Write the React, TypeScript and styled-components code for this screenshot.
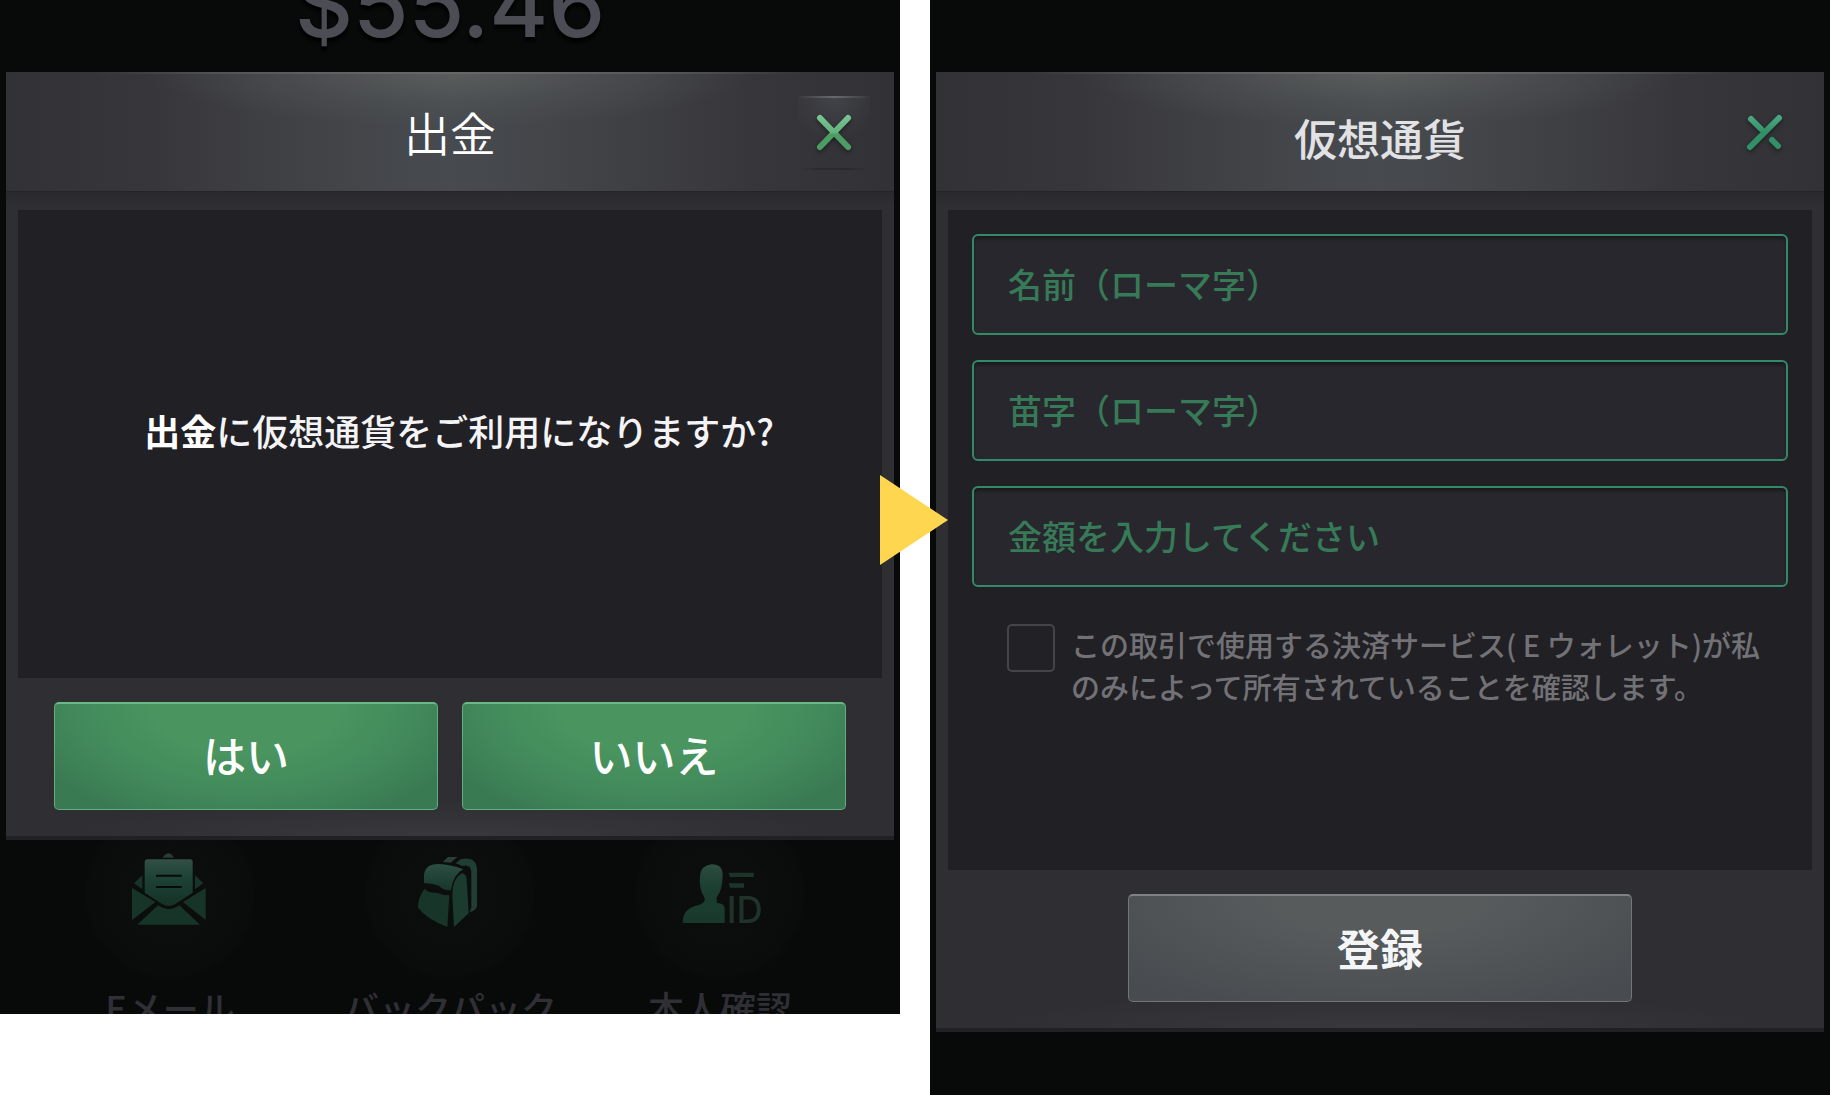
import React, { useState } from "react";
import styled, { createGlobalStyle, css } from "styled-components";

const GlobalStyle = createGlobalStyle`
  *, *::before, *::after { box-sizing: border-box; }
  body {
    margin: 0;
    background: #ffffff;
    font-family: "Noto Sans CJK JP", "Noto Sans", sans-serif;
  }
  button, input { font-family: inherit; }
`;

const Page = styled.main`
  display: grid;
  grid-template-columns: minmax(0, 1fr) 30px minmax(0, 1fr);
  align-items: start;
  min-height: 100vh;
`;

const Screen = styled.section<{ $fill?: boolean }>`
  background: #070a09;
  padding: 0 6px;
  overflow: hidden;
  ${(p) =>
    p.$fill &&
    css`
      align-self: stretch;
    `}
`;

const TopArea = styled.div`
  height: 72px;
  display: flex;
  align-items: flex-end;
  justify-content: center;
  overflow: hidden;
`;

const Balance = styled.div`
  font-family: Inter, "Liberation Sans", sans-serif;
  font-size: 90px;
  font-weight: 500;
  line-height: 134px;
  color: #4b4c54;
  text-shadow: 0 4px 3px #000000;
`;

const Dialog = styled.div`
  background: linear-gradient(#2a292e 120px, #2f2e33 132px, #2f2e33);
  border-bottom: 4px solid #212025;
`;

const DialogHeader = styled.header`
  height: 120px;
  display: grid;
  grid-template-columns: 72px 1fr 72px;
  align-items: center;
  padding: 2px 24px 0;
  border-bottom: 1px solid #252529;
  background:
    radial-gradient(ellipse 34% 46% at 50% 0, rgba(96, 99, 96, 0.75), rgba(84, 88, 88, 0.4) 55%, transparent) top / 100% 100% no-repeat,
    linear-gradient(90deg, transparent 10%, #77787a 50%, transparent 90%) top / 100% 2px no-repeat,
    linear-gradient(90deg, #323136, #37363b 16%, #3f4044 30%, #474b4f 50%, #3f4044 70%, #37363b 84%, #323136);
`;

const Title = styled.h1<{ $light?: boolean }>`
  grid-column: 2;
  margin: 0;
  text-align: center;
  font-size: ${(p) => (p.$light ? 46 : 43)}px;
  line-height: 56px;
  font-weight: ${(p) => (p.$light ? 350 : 500)};
  color: ${(p) => (p.$light ? "#ffffff" : "#e2e2e5")};
  padding: ${(p) => (p.$light ? "0 0 4px" : "8px 0 0")};
`;

const CloseButton = styled.button<{ $raised?: boolean }>`
  width: 72px;
  height: 74px;
  padding: 0;
  border: 0;
  display: grid;
  place-items: center;
  cursor: pointer;
  background: ${(p) =>
    p.$raised
      ? `linear-gradient(90deg, transparent, #66686b, transparent) top / 100% 2px no-repeat,
         linear-gradient(90deg, transparent, #2b2a2f 30%, #2b2a2f 70%, transparent) bottom / 100% 2px no-repeat,
         radial-gradient(ellipse 60% 60% at 50% 0, #424449, transparent)`
      : "transparent"};
  svg {
    width: 36px;
    height: 37px;
    overflow: visible;
    filter: drop-shadow(0 2px 2px rgba(0, 0, 0, 0.4));
  }
`;

const DialogBody = styled.div`
  margin: 18px 12px 0;
  background: #212025;
`;

const Message = styled.p`
  margin: 0;
  min-height: 468px;
  padding: 0 0 28px 18px;
  display: flex;
  align-items: center;
  justify-content: center;
  font-size: 36px;
  line-height: 48px;
  font-weight: 500;
  color: #f4f4f6;
  strong {
    font-weight: 700;
    color: #ffffff;
  }
`;

const Actions = styled.div`
  display: flex;
  justify-content: center;
  gap: 24px;
  padding: 24px 48px 26px;
  background: radial-gradient(ellipse 44% 22% at 50% 100%, #39383d, transparent);
`;

const ActionButton = styled.button<{ $tone: "green" | "gray" }>`
  height: 108px;
  padding: 0 0 6px;
  border-radius: 5px;
  font-size: 43px;
  cursor: pointer;
  ${(p) =>
    p.$tone === "green"
      ? css`
          flex: 1;
          font-weight: 500;
          color: #ffffff;
          border: 1px solid #62b07f;
          border-top: 2px solid #6bb987;
          background: radial-gradient(ellipse 62% 120% at 50% 0, #49945f 40%, #428a5b 70%, #3a7a53 100%);
        `
      : css`
          width: 504px;
          padding-bottom: 4px;
          font-weight: 700;
          color: #f4f5f6;
          border: 1px solid #717678;
          border-top: 2px solid #7e8284;
          background: radial-gradient(ellipse 68% 120% at 50% 0, #575b5c 30%, #4d5154 75%, #484b50 100%);
        `}
`;

const Shortcuts = styled.nav`
  height: 174px;
  overflow: hidden;
  display: grid;
  grid-template-columns: 28fr 28fr 26fr;
  padding: 0 44px 0 24px;
`;

const Shortcut = styled.a`
  display: flex;
  flex-direction: column;
  align-items: center;
  color: #302f35;
  text-decoration: none;
  font-size: 36px;
  font-weight: 500;
  line-height: 36px;
`;

const ShortcutIcon = styled.span`
  width: 170px;
  height: 149px;
  display: flex;
  justify-content: center;
  padding-top: 2px;
  background: radial-gradient(circle at 50% 54px, #0c0f0e, #090c0b 82px, transparent 86px);
  svg {
    width: 96px;
    height: 96px;
    opacity: 0.9;
  }
`;

const Gutter = styled.div`
  position: relative;
  align-self: stretch;
`;

const Arrow = styled.svg`
  position: absolute;
  z-index: 1;
  top: 475px;
  left: -20px;
  width: 68px;
  height: 90px;
`;

const Form = styled.form`
  margin: 0;
`;

const Fields = styled.div`
  display: flex;
  flex-direction: column;
  gap: 25px;
  min-height: 660px;
  padding: 24px;
`;

const Field = styled.input`
  width: 100%;
  height: 101px;
  padding: 0 34px 2px;
  border: 2px solid #348a68;
  border-radius: 6px;
  outline: none;
  background: #28272d;
  box-shadow: inset 0 3px 3px rgba(0, 0, 0, 0.35);
  color: #49a878;
  font-size: 34px;
  font-weight: 500;
  &::placeholder {
    color: #377a58;
    opacity: 1;
  }
`;

const Consent = styled.label`
  display: flex;
  align-items: flex-start;
  gap: 16px;
  padding: 11px 20px 0 35px;
  color: #727276;
  font-size: 29px;
  font-weight: 500;
  line-height: 42px;
`;

const Checkbox = styled.input`
  appearance: none;
  flex: none;
  width: 48px;
  height: 48px;
  margin: 1px 0 0;
  border: 2px solid #454449;
  border-radius: 5px;
  background: #222126;
  &:checked {
    background: #348a68;
  }
`;

function EnvelopeIcon() {
  return (
    <svg viewBox="66 6 288 288" aria-hidden="true">
      <defs>
        <linearGradient id="paper" x1="0" y1="0" x2="0" y2="1">
          <stop offset="0" stopColor="#38574c" />
          <stop offset="0.4" stopColor="#20483a" />
          <stop offset="1" stopColor="#17362a" />
        </linearGradient>
      </defs>
      <path d="M188 53q18-26 34 0z" fill="#2f3f3b" />
      <path d="M134 66q0-8 8-8h128q8 0 8 8v92l-52 34q-20 12-40 0l-52-34z" fill="url(#paper)" />
      <path d="M127 106v42l-25-18zM285 106v42l25-18zM96 144l70 42-70 54zM317 144l-68 42 68 54zM112 254l62-58q34 22 64 0l62 58z" fill="#19392c" />
      <path d="M168 107h77M168 141h77" stroke="#080b0a" strokeWidth="6" />
    </svg>
  );
}

function BackpackIcon() {
  return (
    <svg viewBox="906 6 288 288" aria-hidden="true">
      <defs>
        <linearGradient id="pack" x1="0" y1="0" x2="0" y2="1">
          <stop offset="0" stopColor="#30564a" />
          <stop offset="1" stopColor="#193b2e" />
        </linearGradient>
      </defs>
      <path d="M1028 66l16-15h28l-20 17z" fill="#30443e" />
      <path d="M1067 70l16-13q46-8 48 32v108q-2 14-23 20l6-14V96q-2-24-26-18z" fill="#24443a" />
      <path d="M972 130V104q4-32 42-32 44 2 76 16-30 14-37 63-24 0-36-14-26-8-45-7z" fill="url(#pack)" />
      <path d="M1058 184q-6-66 28-84 14 2 14 20l6 100-44 41z" fill="#1c4031" />
      <path d="M974 146q10 14 36 12 18 8 38 8l-6 95q-62-24-88-58 0-32 20-57z" fill="#193a2c" />
    </svg>
  );
}

function IdentityIcon() {
  return (
    <svg viewBox="-24 -24 288 288" aria-hidden="true">
      <defs>
        <linearGradient id="person" x1="0" y1="0" x2="0" y2="1">
          <stop offset="0" stopColor="#345448" />
          <stop offset="0.35" stopColor="#1e4637" />
          <stop offset="1" stopColor="#1b3d2f" />
        </linearGradient>
      </defs>
      <path d="M95 43q34 0 33 34-1 44-18 65v16q24 2 24 18v43H8q0-44 46-53 24-6 20-22-18-26-14-67 2-30 35-34z" fill="url(#person)" />
      <path d="M146 68h75v13h-71zM146 100h46v13h-42z" fill="#20392f" />
      <text x="140" y="218" fill="#22382f" fontFamily="Inter, sans-serif" fontWeight="500" fontSize="109">
        ID
      </text>
    </svg>
  );
}

function CrossIcon({ broken = false }: { broken?: boolean }) {
  const id = broken ? "cross-broken" : "cross-full";
  return (
    <svg viewBox="0 0 36 37" aria-hidden="true">
      <defs>
        <linearGradient id={id} gradientUnits="userSpaceOnUse" x1="0" y1="0" x2="0" y2="37">
          <stop offset="0" stopColor={broken ? "#4fab85" : "#7cc795"} />
          <stop offset="0.5" stopColor={broken ? "#329069" : "#63b17d"} />
          <stop offset="0.55" stopColor={broken ? "#329069" : "#4c9d65"} />
          <stop offset="1" stopColor={broken ? "#329069" : "#4c9d65"} />
        </linearGradient>
      </defs>
      <path
        d={broken ? "M33 4L4 33M5 5L15 15M26 26L32 32" : "M32 4L4 33M4 4L32 33"}
        stroke={`url(#${id})`}
        strokeWidth="6"
        strokeLinecap="round"
        fill="none"
      />
    </svg>
  );
}

const shortcuts = [
  { label: "Eメール", icon: <EnvelopeIcon /> },
  { label: "バックパック", icon: <BackpackIcon /> },
  { label: "本人確認", icon: <IdentityIcon /> },
];

const fields = ["名前（ローマ字）", "苗字（ローマ字）", "金額を入力してください"];

export default function App() {
  const [agreed, setAgreed] = useState(false);

  return (
    <>
      <GlobalStyle />
      <Page>
        <Screen>
          <TopArea>
            <Balance>$55.46</Balance>
          </TopArea>
          <Dialog role="dialog" aria-label="出金">
            <DialogHeader>
              <Title $light>出金</Title>
              <CloseButton $raised type="button" aria-label="閉じる">
                <CrossIcon />
              </CloseButton>
            </DialogHeader>
            <DialogBody>
              <Message>
                <span>
                  <strong>出金</strong>に仮想通貨をご利用になりますか?
                </span>
              </Message>
            </DialogBody>
            <Actions>
              <ActionButton $tone="green" type="button">はい</ActionButton>
              <ActionButton $tone="green" type="button">いいえ</ActionButton>
            </Actions>
          </Dialog>
          <Shortcuts>
            {shortcuts.map((s) => (
              <Shortcut key={s.label} href="#">
                <ShortcutIcon>{s.icon}</ShortcutIcon>
                {s.label}
              </Shortcut>
            ))}
          </Shortcuts>
        </Screen>

        <Gutter>
          <Arrow viewBox="0 0 68 90" aria-hidden="true">
            <path d="M0 0L68 45L0 90z" fill="#ffd64f" />
          </Arrow>
        </Gutter>

        <Screen $fill>
          <TopArea />
          <Dialog role="dialog" aria-label="仮想通貨">
            <DialogHeader>
              <Title>仮想通貨</Title>
              <CloseButton type="button" aria-label="閉じる">
                <CrossIcon broken />
              </CloseButton>
            </DialogHeader>
            <Form onSubmit={(e) => e.preventDefault()}>
              <DialogBody>
                <Fields>
                  {fields.map((f) => (
                    <Field key={f} type="text" placeholder={f} aria-label={f} />
                  ))}
                  <Consent>
                    <Checkbox
                      type="checkbox"
                      checked={agreed}
                      onChange={(e) => setAgreed(e.target.checked)}
                    />
                    <span>
                      この取引で使用する決済サービス( E ウォレット)が私
                      <br />
                      のみによって所有されていることを確認します。
                    </span>
                  </Consent>
                </Fields>
              </DialogBody>
              <Actions>
                <ActionButton $tone="gray" type="submit">登録</ActionButton>
              </Actions>
            </Form>
          </Dialog>
        </Screen>
      </Page>
    </>
  );
}
